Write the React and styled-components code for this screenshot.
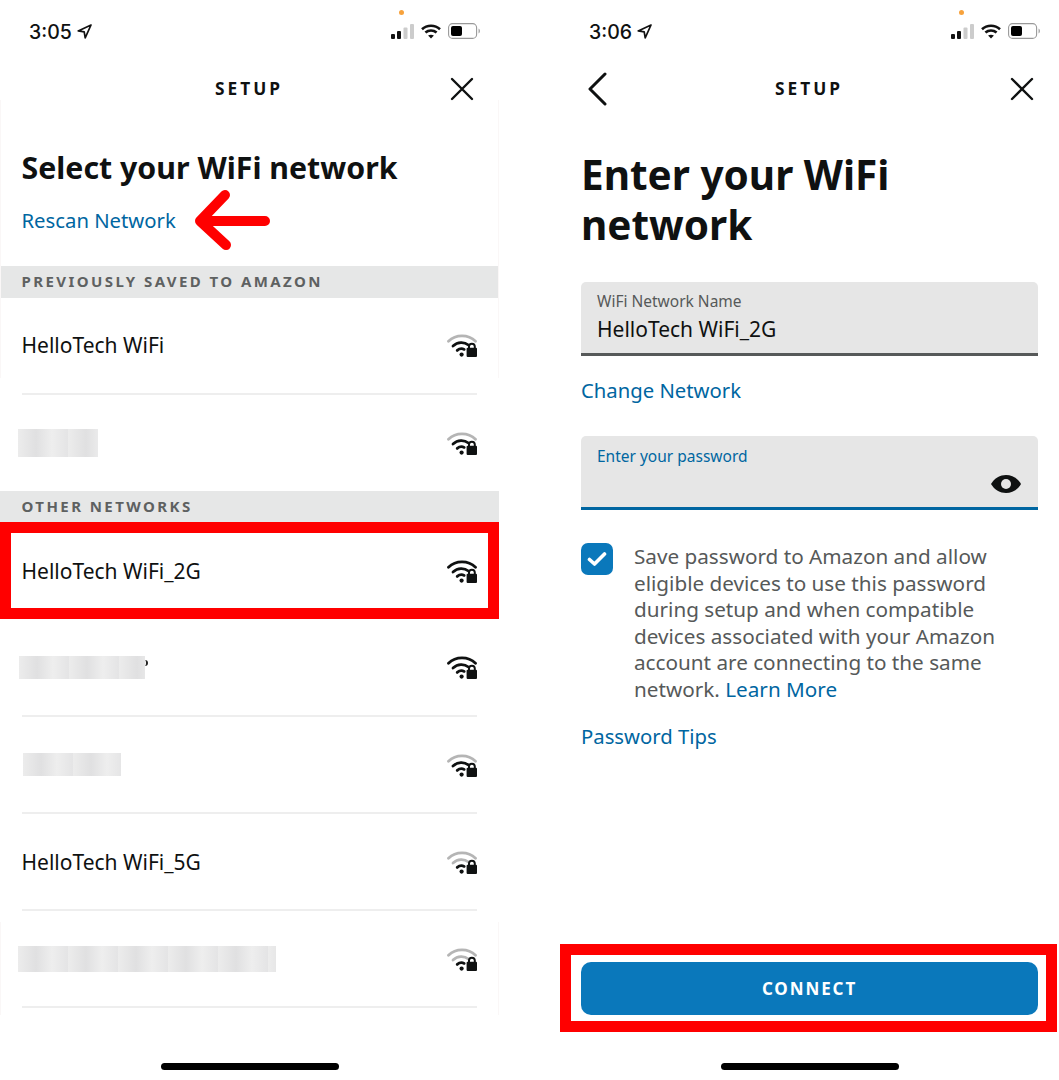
import React from 'react';
import styled, { createGlobalStyle } from 'styled-components';

const Global = createGlobalStyle`
  html, body { margin: 0; padding: 0; background: #fff; }
  body { font-family: "Noto Sans", "Open Sans", sans-serif; color: #0f1111; }
  * { box-sizing: border-box; }
`;

const Page = styled.div`
  display: grid;
  grid-template-columns: 499px 499px;
  column-gap: 61px;
  width: 1059px;
  height: 1080px;
  overflow: hidden;
`;
const Phone = styled.section`
  display: flex;
  flex-direction: column;
  height: 1080px;
  background: #fff;
  position: relative;
`;
const EdgeGuide = styled.div`
  position: absolute;
  left: 0;
  right: 0;
  top: ${p => p.$top}px;
  height: ${p => p.$h}px;
  border-left: 1px solid #faf7f7;
  border-right: 1px solid #faf7f7;
  pointer-events: none;
`;
const StatusBar = styled.div`
  height: 60px;
  flex: none;
  display: flex;
  align-items: center;
  justify-content: space-between;
  padding: 2px 19px 0 29px;
  position: relative;
`;
const Clock = styled.div`
  display: flex;
  align-items: center;
  gap: 5px;
  margin-top: 1px;
  font-family: "Inter", sans-serif;
  font-size: 19.5px;
  font-weight: 500;
`;
const StatusIcons = styled.div`
  display: flex;
  align-items: center;
  gap: 7px;
`;
const OrangeDot = styled.span`
  position: absolute;
  top: 9.5px;
  right: 95px;
  width: 5px;
  height: 5px;
  border-radius: 50%;
  background: #f7a23c;
`;
const Header = styled.header`
  height: 58px;
  flex: none;
  display: flex;
  align-items: center;
  justify-content: space-between;
  padding: 0 24px;
`;
const HeaderSide = styled.div`
  width: 26px;
  height: 26px;
  display: flex;
  align-items: center;
  justify-content: center;
`;
const HeaderTitle = styled.h2`
  margin: 0;
  padding-right: 1px;
  font-size: 17.3px;
  font-weight: 700;
  letter-spacing: 3px;
  line-height: 24px;
`;
const SelectTop = styled.div`
  height: 148px;
  flex: none;
  padding: 30px 21.5px 0;
`;
const SelectTitle = styled.h1`
  margin: 0;
  font-size: 30.3px;
  line-height: 40px;
  font-weight: 700;
  white-space: nowrap;
`;
const LinkRow = styled.div`
  position: relative;
  margin-top: 19px;
  height: 26px;
  display: flex;
  align-items: center;
`;
const TextLink = styled.a`
  color: #0066a1;
  font-size: 20.3px;
  line-height: 26px;
  white-space: nowrap;
`;
const Arrow = styled.svg`
  position: absolute;
  left: 172px;
  top: -18px;
`;
const SectionHead = styled.div`
  height: ${p => p.$h}px;
  flex: none;
  background: #e6e7e7;
  padding: 0 0 2px 21.5px;
  display: flex;
  align-items: center;
  font-size: 15px;
  font-weight: 700;
  letter-spacing: 2.42px;
  color: #5e6161;
  white-space: nowrap;
`;
const Row = styled.div`
  height: ${p => p.$h || 97}px;
  flex: none;
  margin: 0 22px 0 21.5px;
  padding-bottom: ${p => (p.$low ? 0 : 1)}px;
  display: flex;
  align-items: center;
  justify-content: space-between;
  font-size: 21px;
  color: #0f1111;
  border-bottom: ${p => (p.$last ? 'none' : '2px solid #eeeeee')};
`;
const HighlightRow = styled.div`
  height: 97px;
  flex: none;
  border: 11px solid #ff0000;
  padding: 0 11px 0 10.5px;
  display: flex;
  align-items: center;
  justify-content: space-between;
  font-size: 21px;
`;
const Blur = styled.div`
  position: relative;
  width: ${p => p.$w}px;
  height: ${p => p.$h}px;
  margin-left: ${p => p.$x}px;
  background: repeating-linear-gradient(90deg, #ececec 0, #e0e0e1 18px, #eeeeee 34px, #e4e4e5 50px);
  filter: blur(0.5px);
`;
const BlurTail = styled.span`
  position: absolute;
  left: 100%;
  top: 4px;
  width: 3px;
  height: 6px;
  border-right: 2px solid #222;
  border-radius: 0 3px 3px 0;
`;
const Body = styled.div`
  flex: 1;
  display: flex;
  flex-direction: column;
  padding: 0 21px;
`;
const EnterTitle = styled.h1`
  margin: 32px 0 0;
  font-size: 40.5px;
  line-height: 50px;
  font-weight: 700;
`;
const Field = styled.div`
  height: 74px;
  margin-top: ${p => p.$top}px;
  background: #e6e6e6;
  border-radius: 5px 5px 0 0;
  border-bottom: 3px solid ${p => p.$line};
  padding: ${p => p.$pad}px 16px 0;
  position: relative;
`;
const FieldLabel = styled.div`
  font-size: 15.5px;
  line-height: 20px;
  color: ${p => p.$color};
`;
const FieldValue = styled.div`
  font-size: 21px;
  line-height: 28px;
  margin-top: 4px;
`;
const Eye = styled.svg`
  position: absolute;
  right: 17px;
  top: 39px;
`;
const SpacedLink = styled(TextLink)`
  display: block;
  margin-top: ${p => p.$top}px;
`;
const CheckRow = styled.div`
  display: flex;
  gap: 21px;
  margin-top: 33px;
`;
const CheckBox = styled.div`
  width: 32px;
  height: 32px;
  flex: none;
  border-radius: 7px;
  background: #0a78bb;
  display: flex;
  align-items: center;
  justify-content: center;
`;
const CheckText = styled.p`
  margin: 0;
  font-size: 20.7px;
  line-height: 26.6px;
  color: #565959;
`;
const InlineLink = styled.a`
  color: #0066a1;
`;
const ButtonFrame = styled.div`
  margin: auto -19px 0 -21px;
  height: 88px;
  border: 11px solid #ff0000;
  padding: 7px 8px 6px 10px;
`;
const ConnectButton = styled.button`
  width: 100%;
  height: 53px;
  border: 0;
  border-radius: 10px;
  background: #0a78bb;
  color: #fff;
  font: 700 17px "Noto Sans", sans-serif;
  letter-spacing: 1.9px;
`;
const HomeArea = styled.div`
  flex: none;
  height: ${p => p.$h}px;
  display: flex;
  justify-content: center;
  align-items: flex-end;
  padding-bottom: 10px;
  margin-top: auto;
`;
const HomeBar = styled.div`
  width: 178px;
  height: 7px;
  border-radius: 4px;
  background: #000;
`;

const StatusGlyphs = () => (
  <StatusIcons>
    <svg width="23" height="15" viewBox="0 0 23 15">
      <rect x="0" y="10" width="4" height="5" rx="1" fill="#111" />
      <rect x="6" y="7" width="4" height="8" rx="1" fill="#111" />
      <rect x="12.5" y="3.5" width="4" height="11.5" rx="1" fill="#ccc" />
      <rect x="19" y="0" width="4" height="15" rx="1" fill="#ccc" />
    </svg>
    <svg width="20" height="15" viewBox="0 0 20 15" fill="none" stroke="#111" strokeWidth="2.6">
      <path d="M1 5.2C6 .6 14 .6 19 5.2" />
      <path d="M4.4 8.6c3.2-2.8 8-2.8 11.2 0" />
      <path d="M10 14.6l-2.9-3c1.7-1.3 4.1-1.3 5.8 0z" fill="#111" stroke="none" />
    </svg>
    <svg width="32" height="16" viewBox="0 0 32 16">
      <rect x=".6" y=".6" width="28" height="14.8" rx="4" fill="none" stroke="#999" strokeWidth="1.1" />
      <rect x="3" y="3" width="11" height="10" rx="2" fill="#000" />
      <path d="M30.5 5.5c1 .4 1.5 1.3 1.5 2.5s-.5 2.1-1.5 2.5z" fill="#aaa" />
    </svg>
  </StatusIcons>
);

const Status = ({ time }) => (
  <StatusBar>
    <Clock>
      {time}
      <svg width="15" height="15" viewBox="0 0 15 15" fill="none" stroke="#111" strokeWidth="1.7" strokeLinejoin="round">
        <path d="M14 1 1.2 6.9l6 .9 1 6z" />
      </svg>
    </Clock>
    <OrangeDot />
    <StatusGlyphs />
  </StatusBar>
);

const Close = () => (
  <svg width="24" height="24" viewBox="0 0 24 24" stroke="#0f1111" strokeWidth="2.4" strokeLinecap="round">
    <path d="M2 2l20 20M22 2 2 22" />
  </svg>
);
const Back = () => (
  <svg width="20" height="34" viewBox="0 0 20 34" fill="none" stroke="#0f1111" strokeWidth="3" strokeLinecap="round" strokeLinejoin="round">
    <path d="M18 2 3 17l15 15" />
  </svg>
);

const Wifi = ({ level }) => {
  const on = '#0f1111';
  const off = '#b5b5b5';
  return (
    <svg width="30" height="24" viewBox="0 0 30 24" fill="none" strokeWidth="2.8" strokeLinecap="round">
      <path d="M1.5 8.2C8.8 1 21.2 1 28.5 8.2" stroke={level >= 3 ? on : off} />
      <path d="M6 13c4.8-4.4 11.2-4.4 15.4-1" stroke={level >= 2 ? on : off} />
      <path d="M10.2 17.4c2.3-1.9 4.8-2.1 7-1" stroke={on} />
      <circle cx="14.6" cy="21.6" r="2.1" fill={on} />
      <rect x="19.6" y="14.8" width="10.4" height="9.2" rx="1" fill={on} />
      <path d="M22 15v-1.4a2.9 2.9 0 0 1 5.8 0V15" stroke={on} strokeWidth="2" strokeLinecap="butt" />
    </svg>
  );
};

const App = () => (
  <>
    <Global />
    <Page>
      <Phone>
        <Status time="3:05" />
        <Header>
          <HeaderSide />
          <HeaderTitle>SETUP</HeaderTitle>
          <HeaderSide><Close /></HeaderSide>
        </Header>
        <SelectTop>
          <SelectTitle>Select your WiFi network</SelectTitle>
          <LinkRow>
            <TextLink>Rescan Network</TextLink>
            <Arrow width="78" height="64" viewBox="0 0 78 64" fill="none" stroke="#ff0000" strokeWidth="10" strokeLinecap="round" strokeLinejoin="round">
              <path d="M31 6 6 32l26 24M8 32h63" />
            </Arrow>
          </LinkRow>
        </SelectTop>
        <SectionHead $h={32}>PREVIOUSLY SAVED TO AMAZON</SectionHead>
        <Row>HelloTech WiFi<Wifi level={2} /></Row>
        <Row $last $h={96}><Blur $w={80} $h={28} $x={-4} /><Wifi level={2} /></Row>
        <SectionHead $h={31}>OTHER NETWORKS</SectionHead>
        <HighlightRow>HelloTech WiFi_2G<Wifi level={3} /></HighlightRow>
        <Row $h={98} $low><Blur $w={126} $h={23} $x={-3}><BlurTail /></Blur><Wifi level={3} /></Row>
        <Row $low><Blur $w={98} $h={23} $x={1} /><Wifi level={2} /></Row>
        <Row $low>HelloTech WiFi_5G<Wifi level={1} /></Row>
        <Row $low><Blur $w={258} $h={26} $x={-4} /><Wifi level={1} /></Row>
        <HomeArea $h={72}><HomeBar /></HomeArea>
        <EdgeGuide $top={100} $h={278} />
        <EdgeGuide $top={922} $h={93} />
      </Phone>
      <Phone>
        <Status time="3:06" />
        <Header>
          <HeaderSide><Back /></HeaderSide>
          <HeaderTitle>SETUP</HeaderTitle>
          <HeaderSide><Close /></HeaderSide>
        </Header>
        <Body>
          <EnterTitle>Enter your WiFi network</EnterTitle>
          <Field $line="#565959" $top={32} $pad={9}>
            <FieldLabel $color="#565959">WiFi Network Name</FieldLabel>
            <FieldValue>HelloTech WiFi_2G</FieldValue>
          </Field>
          <SpacedLink $top={21}>Change Network</SpacedLink>
          <Field $line="#0066a1" $top={33} $pad={10}>
            <FieldLabel $color="#0066a1">Enter your password</FieldLabel>
            <Eye width="30" height="18" viewBox="0 0 30 18">
              <path d="M0 9C7-3 23-3 30 9 23 21 7 21 0 9z" fill="#0f1111" />
              <circle cx="15" cy="9" r="5" fill="#e6e6e6" />
            </Eye>
          </Field>
          <CheckRow>
            <CheckBox>
              <svg width="20" height="16" viewBox="0 0 20 16" fill="none" stroke="#fff" strokeWidth="3.6" strokeLinecap="round" strokeLinejoin="round">
                <path d="M2.5 8.5 7.5 13 17.5 3" />
              </svg>
            </CheckBox>
            <CheckText>
              Save password to Amazon and allow eligible devices to use this password during setup and when compatible devices associated with your Amazon account are connecting to the same network. <InlineLink>Learn More</InlineLink>
            </CheckText>
          </CheckRow>
          <SpacedLink $top={20}>Password Tips</SpacedLink>
          <ButtonFrame><ConnectButton>CONNECT</ConnectButton></ButtonFrame>
        </Body>
        <HomeArea $h={48}><HomeBar /></HomeArea>
      </Phone>
    </Page>
  </>
);

export default App;
